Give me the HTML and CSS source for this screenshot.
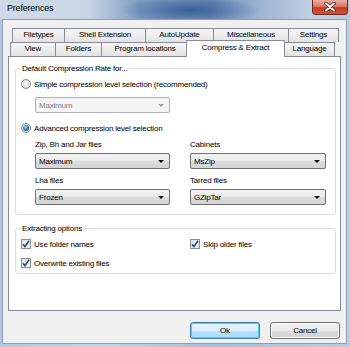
FILE: index.html
```html
<!DOCTYPE html>
<html lang="en">
<head>
    <meta charset="UTF-8">
    <title>Preferences</title>
    <link rel="stylesheet" href="styles.css">
</head>
<body>
    <div class="window">
        <div class="titlebar">
            <span class="title">Preferences</span>
            <span class="close">
                <svg width="12" height="10" viewBox="0 0 12 10">
                    <path d="M2 1.5 L10 8.5 M10 1.5 L2 8.5" stroke="#5a1a10" stroke-width="3.6" stroke-linecap="round"/>
                    <path d="M2 1.5 L10 8.5 M10 1.5 L2 8.5" stroke="#ffffff" stroke-width="2" stroke-linecap="round"/>
                </svg>
            </span>
        </div>

        <div class="client">
            <div class="tabs">
                <div class="tabrow back">
                    <span class="tab t-filetypes">Filetypes</span>
                    <span class="tab t-shell">Shell Extension</span>
                    <span class="tab t-update">AutoUpdate</span>
                    <span class="tab t-misc">Miscellaneous</span>
                    <span class="tab t-settings">Settings</span>
                </div>
                <div class="tabrow front">
                    <span class="tab t-view">View</span>
                    <span class="tab t-folders">Folders</span>
                    <span class="tab t-locations">Program locations</span>
                    <span class="tab t-compress selected">Compress &amp; Extract</span>
                    <span class="tab t-language">Language</span>
                </div>
            </div>

            <div class="panel">
                <fieldset class="group rate">
                    <legend>Default Compression Rate for...</legend>
                    <div class="option first"><span class="radio"></span>Simple compression level selection (recommended)</div>
                    <div class="combo disabled simple">Maximum<span class="arrow"></span></div>
                    <div class="option second"><span class="radio checked"></span>Advanced compression level selection</div>
                    <div class="fields">
                        <div class="field">
                            <span class="caption">Zip, Bh and Jar files</span>
                            <div class="combo">Maximum<span class="arrow"></span></div>
                        </div>
                        <div class="field">
                            <span class="caption">Cabinets</span>
                            <div class="combo">MsZip<span class="arrow"></span></div>
                        </div>
                        <div class="field">
                            <span class="caption">Lha files</span>
                            <div class="combo">Frozen<span class="arrow"></span></div>
                        </div>
                        <div class="field">
                            <span class="caption">Tarred files</span>
                            <div class="combo">GZipTar<span class="arrow"></span></div>
                        </div>
                    </div>
                </fieldset>

                <fieldset class="group extract">
                    <legend>Extracting options</legend>
                    <div class="checks">
                        <div class="option"><span class="check"><svg width="8" height="8" viewBox="0 0 8 8"><path d="M1 4.2 L3 6.6 L7 0.8" fill="none" stroke="#2a4a8a" stroke-width="1.6"/></svg></span>Use folder names</div>
                        <div class="option"><span class="check"><svg width="8" height="8" viewBox="0 0 8 8"><path d="M1 4.2 L3 6.6 L7 0.8" fill="none" stroke="#2a4a8a" stroke-width="1.6"/></svg></span>Skip older files</div>
                        <div class="option"><span class="check"><svg width="8" height="8" viewBox="0 0 8 8"><path d="M1 4.2 L3 6.6 L7 0.8" fill="none" stroke="#2a4a8a" stroke-width="1.6"/></svg></span>Overwrite existing files</div>
                    </div>
                </fieldset>
            </div>

            <div class="buttons">
                <button class="default">Ok</button>
                <button>Cancel</button>
            </div>
        </div>
    </div>
</body>
</html>
```

FILE: styles.css
```css
body {
    margin: 0;
    font-family: "Liberation Sans", Arial, sans-serif;
    font-size: 8px;
    letter-spacing: -0.2px;
    line-height: 11px;
    color: #000000;
}

.window {
    width: 350px;
    height: 347px;
    box-sizing: border-box;
    display: flex;
    flex-direction: column;
    background: linear-gradient(90deg, #b4c9e1 0%, #c4d4e6 30%, #a9bfd9 60%, #bccde2 100%);
}

.titlebar {
    height: 19px;
    flex: none;
    display: flex;
    justify-content: space-between;
    align-items: flex-start;
    background:
        radial-gradient(ellipse 70px 14px at 190px 10px, rgba(40, 80, 140, 0.75), rgba(40, 80, 140, 0) 100%),
        linear-gradient(90deg, #cfdae7 0%, #c9d6e5 25%, #7f9cc2 40%, #6f8fbb 60%, #9fb6d3 75%, #c2d2e4 90%, #b7c9de 100%);
}

.title {
    padding: 3px 0 0 7px;
    font-size: 9px;
    color: #000000;
}

.close {
    width: 36px;
    height: 15px;
    margin-right: 2px;
    box-sizing: border-box;
    display: flex;
    align-items: center;
    justify-content: center;
    border: 1px solid #6b2a20;
    border-top: none;
    border-radius: 0 0 4px 4px;
    background: linear-gradient(#eab0a2 0%, #dc7a64 45%, #c63a22 55%, #d2563a 100%);
}

.client {
    flex: 1;
    margin: 0 3px 3px 2px;
    border: 1px solid #8d9db3;
    background: #f0f0f0;
    display: flex;
    flex-direction: column;
}

/* tabs */

.tabs {
    padding: 8px 5px 0 5px;
}

.tabrow {
    display: flex;
    height: 14px;
}

.tabrow.back {
    padding-left: 4px;
}

.tabrow.front {
    padding-left: 2px;
}

.tab {
    box-sizing: border-box;
    height: 14px;
    border: 1px solid #898c95;
    border-bottom: none;
    margin-right: -1px;
    background: linear-gradient(#f6f6f6, #e3e3e3);
    text-align: center;
    line-height: 12px;
}

.tab.selected {
    position: relative;
    z-index: 1;
    height: 17px;
    margin: -2px -1px -1px -2px;
    background: #ffffff;
    line-height: 14px;
}

.t-filetypes { width: 53px; }
.t-shell { width: 82px; }
.t-update { width: 69px; }
.t-misc { width: 76px; }
.t-settings { width: 51px; }
.t-view { width: 46px; }
.t-folders { width: 47px; }
.t-locations { width: 88px; }
.t-compress { width: 99px; }
.t-language { width: 51px; }

.panel {
    height: 255px;
    box-sizing: border-box;
    margin: 0 5px;
    border: 1px solid #898c95;
    background: #ffffff;
    padding: 6px 4px 0 6px;
}

/* group boxes */

.group {
    margin: 0;
    padding: 0 0 9px 5px;
    border: 1px solid #d5dfe5;
    border-radius: 3px;
}

.group legend {
    padding: 0 1px;
    margin-left: 0;
}

.extract {
    margin-top: 8px;
    padding-bottom: 4px;
}

.option {
    display: flex;
    align-items: center;
    height: 12px;
    white-space: nowrap;
}

.rate .first {
    margin-top: 4px;
}

.rate .second {
    margin-top: 9px;
}

.radio {
    width: 10px;
    height: 10px;
    box-sizing: border-box;
    margin-right: 3px;
    border-radius: 50%;
    border: 1px solid #8b8f94;
    background: radial-gradient(circle at 50% 45%, #f2f2f2 20%, #d6d6d6 100%);
    display: flex;
    align-items: center;
    justify-content: center;
}

.radio.checked::after {
    content: "";
    width: 6px;
    height: 6px;
    border-radius: 50%;
    background: radial-gradient(circle at 40% 35%, #9fdcf8 0%, #2f86c8 45%, #0f4a86 100%);
}

.check {
    width: 10px;
    height: 10px;
    box-sizing: border-box;
    margin-right: 3px;
    border: 1px solid #8b8f94;
    background: linear-gradient(135deg, #e2e2e2, #f8f8f8);
    display: flex;
    align-items: center;
    justify-content: center;
}

/* combo boxes */

.combo {
    box-sizing: border-box;
    width: 135px;
    height: 16px;
    display: flex;
    align-items: center;
    justify-content: space-between;
    padding: 0 5px 0 3px;
    border: 1px solid #707070;
    border-radius: 2px;
    background: linear-gradient(#f2f2f2 0%, #ebebeb 50%, #dedede 51%, #d3d3d3 100%);
}

.arrow {
    width: 0;
    height: 0;
    border-left: 3px solid transparent;
    border-right: 3px solid transparent;
    border-top: 3px solid #000000;
}

.combo.disabled {
    border-color: #adb2b5;
    background: #f4f4f4;
    color: #838383;
}

.combo.disabled .arrow {
    border-top-color: #a0a0a0;
}

.simple {
    margin: 7px 0 0 14px;
}

.fields {
    display: grid;
    grid-template-columns: 135px 136px;
    column-gap: 20px;
    row-gap: 6px;
    margin: 5px 0 0 14px;
}

.field {
    display: flex;
    flex-direction: column;
    gap: 3px;
}

.field:nth-child(2) .combo,
.field:nth-child(4) .combo {
    width: 136px;
}

/* checkboxes */

.checks {
    display: grid;
    grid-template-columns: 169px 1fr;
    row-gap: 7px;
    padding-top: 4px;
}

/* dialog buttons */

.buttons {
    display: flex;
    justify-content: flex-end;
    gap: 10px;
    padding: 11px 6px 0 0;
}

button {
    width: 70px;
    height: 17px;
    padding: 0;
    font-family: inherit;
    font-size: 8px;
    letter-spacing: -0.2px;
    color: #000000;
    border: 1px solid #707070;
    border-radius: 3px;
    background: linear-gradient(#f2f2f2 0%, #ebebeb 50%, #dddddd 51%, #cfcfcf 100%);
    box-shadow: inset 0 0 0 1px #fcfcfc;
}

button.default {
    border-color: #3c7fb1;
    background: linear-gradient(#eaf6fd 0%, #d9f0fc 50%, #bee6fd 51%, #a7d9f5 100%);
    box-shadow: inset 0 0 0 1px #48d0f4;
}
```
